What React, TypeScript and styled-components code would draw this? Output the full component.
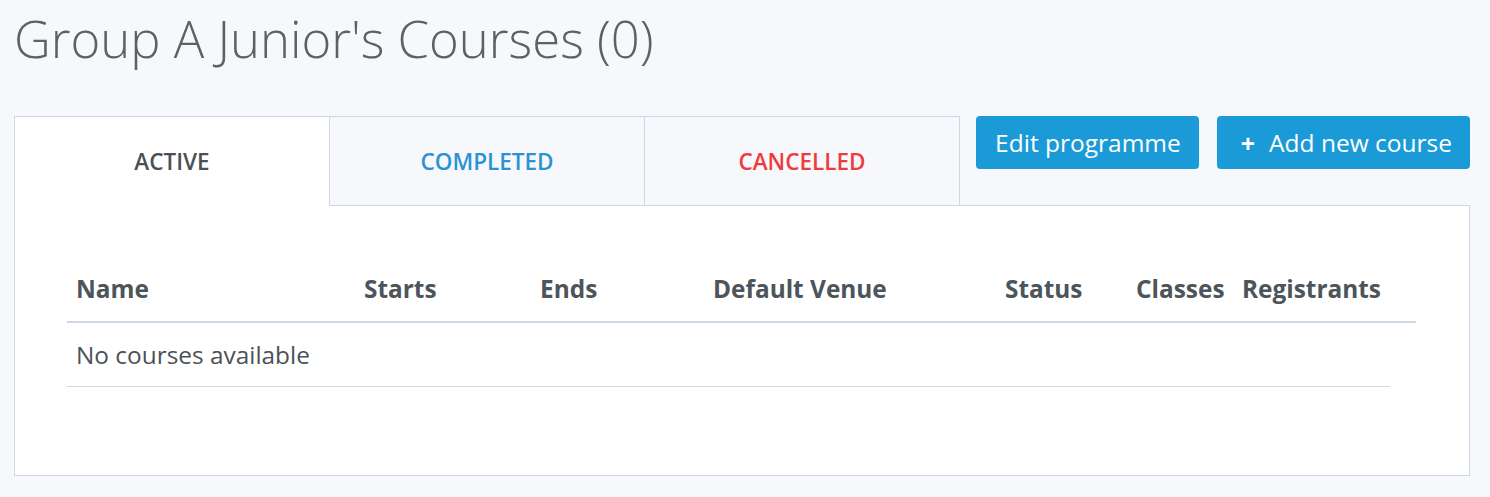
import React from 'react';
import styled, { createGlobalStyle } from 'styled-components';

const GlobalStyle = createGlobalStyle`
  body {
    margin: 0;
    background: #f7f8fb;
    font-family: 'Open Sans', 'Liberation Sans', sans-serif;
    color: #4b5257;
  }
`;

const Page = styled.div`
  width: 1456px;
  padding: 0 20px 22px 14px;
`;

const Title = styled.h1`
  margin: 0;
  padding-top: 7px;
  height: 109px;
  font-size: 50.8px;
  font-weight: 300;
  line-height: 64px;
  color: #5c6165;
`;

const TopRow = styled.div`
  display: flex;
  align-items: flex-start;
`;

const Tabs = styled.div`
  display: flex;
  width: 946px;
  margin-bottom: -1px;
  position: relative;
  z-index: 1;
`;

const Tab = styled.div<{ active?: boolean; tone: string }>`
  flex: 1;
  height: 88px;
  display: flex;
  align-items: center;
  justify-content: center;
  border: 1px solid #cdd7e5;
  border-bottom-color: ${(p) => (p.active ? '#ffffff' : '#cdd7e5')};
  background: ${(p) => (p.active ? '#ffffff' : '#f7f8fb')};
  color: ${(p) => p.tone};
  font-size: 22.5px;
  font-weight: 600;
  & + & {
    margin-left: -1px;
  }
`;

const Actions = styled.div`
  display: flex;
  gap: 18px;
  margin-left: auto;
`;

const Button = styled.button`
  height: 53px;
  padding: 0 18px 0 19px;
  border: none;
  border-radius: 4px;
  background: #1a9bd7;
  color: #ffffff;
  font-family: inherit;
  font-size: 24.5px;
  display: flex;
  align-items: center;
  gap: 14px;
`;

const Plus = styled.span`
  font-size: 25px;
  font-weight: 700;
  padding-left: 5px;
`;

const Panel = styled.div`
  background: #ffffff;
  border: 1px solid #cdd7e5;
  padding: 50px 0 88px 52px;
`;

const Table = styled.div`
  width: 1349px;
`;

const HeadRow = styled.div`
  display: grid;
  grid-template-columns: 288px 176px 173px 292px 131px 106px 183px;
  border-bottom: 2px solid #cdd7e5;
`;

const HeadCell = styled.div`
  height: 65px;
  padding-left: 9px;
  display: flex;
  align-items: center;
  font-size: 24.4px;
  font-weight: 700;
  color: #4d555b;
  white-space: nowrap;
`;

const EmptyRow = styled.div`
  width: 1314px;
  height: 63px;
  padding-left: 9px;
  display: flex;
  align-items: center;
  border-bottom: 1px solid #cdd7e5;
  font-size: 24.4px;
  color: #4b5257;
`;

const columns = ['Name', 'Starts', 'Ends', 'Default Venue', 'Status', 'Classes', 'Registrants'];

const App = () => {
  return (
    <Page>
      <GlobalStyle />
      <Title>Group A Junior's Courses (0)</Title>
      <TopRow>
        <Tabs>
          <Tab active tone="#4b5056">ACTIVE</Tab>
          <Tab tone="#2b93d1">COMPLETED</Tab>
          <Tab tone="#f03b3b">CANCELLED</Tab>
        </Tabs>
        <Actions>
          <Button>Edit programme</Button>
          <Button>
            <Plus>+</Plus>Add new course
          </Button>
        </Actions>
      </TopRow>
      <Panel>
        <Table>
          <HeadRow>
            {columns.map((c) => (
              <HeadCell key={c}>{c}</HeadCell>
            ))}
          </HeadRow>
          <EmptyRow>No courses available</EmptyRow>
        </Table>
      </Panel>
    </Page>
  );
};

export default App;
